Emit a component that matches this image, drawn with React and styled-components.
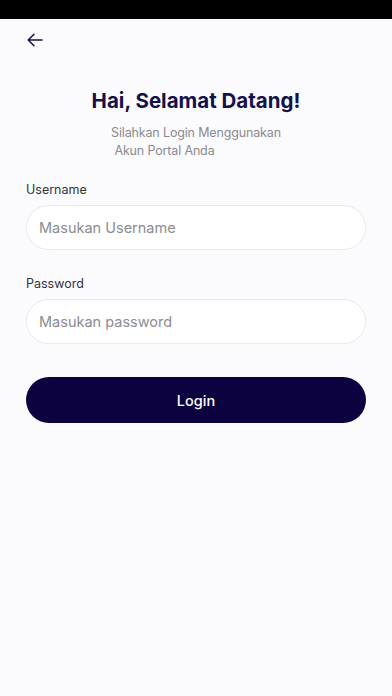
import React from "react";
import styled, { createGlobalStyle } from "styled-components";

const GlobalStyle = createGlobalStyle`
  * { box-sizing: border-box; }
  html, body { margin: 0; padding: 0; background: #fbfbfe; }
  body { font-family: Inter, "Noto Sans", sans-serif; }
`;

const App = () => {
  return (
    <>
      <GlobalStyle />
      <Screen>
        <StatusBar />
        <Content>
          <BackButton aria-label="back">
            <svg width="16" height="14" viewBox="0 0 16 14" fill="none">
              <path
                d="M15 7H1.5M7 1.2L1.2 7L7 12.8"
                stroke="#14104a"
                strokeWidth="1.5"
                strokeLinecap="round"
                strokeLinejoin="round"
              />
            </svg>
          </BackButton>
          <Head>Hai, Selamat Datang!</Head>
          <Sub>
            Silahkan Login Menggunakan
            <br />
            &nbsp;Akun Portal Anda
          </Sub>
          <Form>
            <Field>
              <Label>Username</Label>
              <Input placeholder="Masukan Username" />
            </Field>
            <Field>
              <Label>Password</Label>
              <Input type="password" placeholder="Masukan password" />
            </Field>
            <Button>Login</Button>
          </Form>
        </Content>
      </Screen>
    </>
  );
};

export default App;

const Screen = styled.div`
  width: 392px;
  min-height: 696px;
  background: #fbfbfe;
  display: flex;
  flex-direction: column;
`;

const StatusBar = styled.div`
  height: 19px;
  background: #000;
`;

const Content = styled.div`
  display: flex;
  flex-direction: column;
  padding: 0 26px;
`;

const BackButton = styled.div`
  width: 18px;
  height: 20px;
  margin-top: 11px;
  display: flex;
  align-items: center;
  justify-content: center;
`;

const Head = styled.div`
  margin-top: 38px;
  text-align: center;
  font-size: 20.5px;
  font-weight: 700;
  color: #14104a;
`;

const Sub = styled.div`
  margin-top: 11px;
  align-self: center;
  font-size: 12.5px;
  letter-spacing: -0.15px;
  line-height: 18px;
  color: #8a8a8f;
`;

const Form = styled.div`
  margin-top: 22px;
  display: flex;
  flex-direction: column;
`;

const Field = styled.div`
  display: flex;
  flex-direction: column;
  margin-bottom: 26px;
`;

const Label = styled.div`
  font-size: 12.5px;
  color: #333338;
  margin-bottom: 8px;
`;

const Input = styled.input`
  height: 45px;
  width: 100%;
  border: 1px solid #e9e9ee;
  border-radius: 23px;
  background: #fff;
  padding: 0 12px;
  font-family: inherit;
  font-size: 14.5px;
  color: #333;
  outline: none;
  &::placeholder {
    color: #8c8c90;
  }
`;

const Button = styled.div`
  margin-top: 7px;
  height: 46px;
  border-radius: 23px;
  background: #0c0240;
  color: #fff;
  display: flex;
  align-items: center;
  justify-content: center;
  font-size: 14.5px;
  font-weight: 500;
`;
